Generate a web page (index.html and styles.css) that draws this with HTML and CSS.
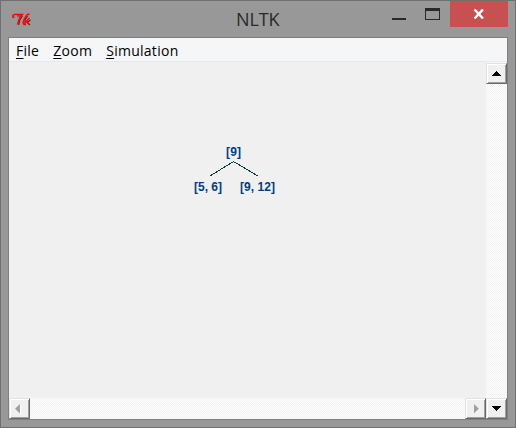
FILE: index.html
```html
<!DOCTYPE html>
<html lang="en">
<head>
<meta charset="utf-8">
<title>NLTK</title>
<link rel="stylesheet" href="styles.css">
</head>
<body>
<div class="window">
  <header class="titlebar">
    <svg class="logo" width="20" height="14" viewBox="0 0 20 14" fill="none">
      <path d="M1.500 5L2 3.500M5 3H9M10.500 3L8 6.500L6.500 12M15.500 3L13 7V11.500M18.500 7L15 9.500L18 12" stroke="#801818" stroke-width="1.200"/>
      <path d="M.8 4.500V2.500L2.500 1.500H10.500L7.500 5L5.500 11.500M17.500 1L15 1.800L12.500 5.500L11 9.500L12 11.500H14M17.500 5L14.500 8L17 11M13 8.500H15.500" stroke="#f00" stroke-width="1.400"/>
    </svg>
    <h1 class="title">NLTK</h1>
    <div class="controls">
      <span class="minimize"></span>
      <span class="maximize"></span>
      <span class="close"><svg width="12" height="10" viewBox="0 0 12 10"><path d="M1.500 .5L10 9.500M10 .5L1.500 9.500" stroke="#fff" stroke-width="2.400"/></svg></span>
    </div>
  </header>
  <main class="client">
    <nav class="menu"><span><u>F</u>ile</span><span><u>Z</u>oom</span><span><u>S</u>imulation</span></nav>
    <div class="workspace">
      <svg class="canvas" width="477" height="336">
        <g class="edges"><path d="M224.500 99.500L201 114M224.500 99.500L249 114"/></g>
        <g class="labels"><text x="217" y="94" textLength="15">[9]</text><text x="185" y="129" textLength="28">[5, 6]</text><text x="231" y="129" textLength="35">[9, 12]</text></g>
      </svg>
      <div class="scroll vertical">
        <span class="button"><svg width="9" height="5" shape-rendering="crispEdges"><path d="M4 0h1v1h1v1h1v1h1v1h1v1H0V4h1V3h1V2h1V1h1z"/></svg></span>
        <span class="button"><svg width="9" height="5" shape-rendering="crispEdges"><path d="M0 0h9v1H8v1H7v1H6v1H5v1H4V4H3V3H2V2H1V1H0z"/></svg></span>
      </div>
      <div class="scroll horizontal">
        <span class="button left"><svg class="off" width="6" height="10"><path class="glow" d="M5 1h1v9H5z"/><path d="M5 0v9.500L0 4.750z"/></svg></span>
        <span class="button right"><svg class="off" width="6" height="10"><path class="glow" d="M1 1v9L6 5z"/><path d="M0 0v9.500L5 4.750z"/></svg></span>
      </div>
    </div>
  </main>
</div>
</body>
</html>
```
FILE: styles.css
```css
* { box-sizing: border-box; }
body { margin: 0; background: #fff; overflow: hidden; }
.window { width: 516px; height: 428px; border: 1px solid #707070; background: #989898; padding: 0 7px 7px; }
.titlebar { height: 36px; display: grid; grid-template-columns: 228px 1fr auto; }
.logo { margin: 12px 0 0 4px; }
.title { margin: 5px 0 0; font: 400 18px/26px "Open Sans", sans-serif; color: #292929; letter-spacing: -.1px; }
.controls { display: flex; }
.minimize { width: 14px; height: 2px; margin: 17px 19px 0 0; background: #292929; }
.maximize { width: 15px; height: 12px; margin: 7px 10px 0 0; border: 1px solid #292929; border-top-width: 3px; }
.close { width: 58px; height: 26px; background: #c75050; display: flex; align-items: center; justify-content: center; }
.client { width: 500px; height: 383px; border: 1px solid #808080; background: #f0f0f0; }
.menu { height: 24px; background: #f5f6f7; border-bottom: 1px solid #e8e8ec; display: flex; gap: 14px; padding-left: 7px; font: 14px/25px "Open Sans", sans-serif; letter-spacing: .27px; color: #000; }
.menu u { text-underline-offset: 2px; text-decoration-thickness: 1px; }
.workspace { display: grid; grid-template-columns: 477px 21px; grid-template-rows: 336px 21px; }
.canvas { display: block; }
.edges { fill: none; stroke: #00403f; stroke-width: 1; shape-rendering: crispEdges; }
.labels { font: bold 12px "Liberation Sans", sans-serif; fill: #004080; }
.scroll { display: flex; justify-content: space-between; background: repeating-conic-gradient(#fff 0 25%, #f0f0f0 0 50%) 0 0 / 2px 2px; }
.vertical { grid-column: 2; grid-row: 1 / 3; flex-direction: column; padding-top: 1px; }
.horizontal { grid-column: 1; grid-row: 2; }
.button { width: 21px; height: 21px; border: 1px solid; border-color: #e3e3e3 #696969 #696969 #e3e3e3; background: #f0f0f0; box-shadow: inset 1px 1px #fff, inset -1px -1px #a0a0a0; display: flex; align-items: center; justify-content: center; }
.left { padding-right: 3px; }
.right { padding-left: 2px; }
.off { fill: #a0a0a0; }
.glow { fill: #fff; }
```
